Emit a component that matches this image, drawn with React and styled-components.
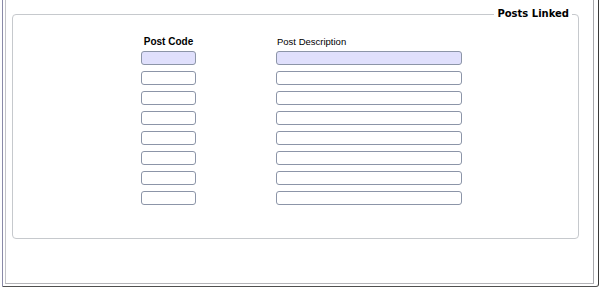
import { Fragment } from "react"
import styled, { createGlobalStyle } from "styled-components"

const GlobalStyle = createGlobalStyle`
    html, body {
        margin: 0;
        padding: 0;
        background: #ffffff;
        overflow: hidden;
    }
    body {
        font-family: "Liberation Sans", Arial, sans-serif;
        font-size: 11px;
        color: #000000;
    }
`
const Window = styled.div`
    width: 600px;
    height: 100vh;
    box-sizing: border-box;
    padding: 0 1px 1px 2px;
    background: #ffffff;
    display: flex;
`
const Frame = styled.div`
    flex: 1;
    display: flex;
    box-sizing: border-box;
    border-left: 1px solid #8a8aa8;
    border-right: 1px solid #3a3a3a;
    border-bottom: 1px solid #505050;
    border-bottom-right-radius: 3px;
    padding: 0 4px 2px 2px;
`
const Panel = styled.div`
    flex: 1;
    box-sizing: border-box;
    border-left: 1px solid #c4c4c8;
    border-right: 1px solid #a8a8ac;
    border-bottom: 1px solid #b4b4b8;
    padding: 0 14px 0 6px;
`
const GroupBox = styled.fieldset`
    margin: 7px 0 0 0;
    padding: 14px 0 33px 128px;
    border: 1px solid #c6c9cd;
    border-radius: 4px;
`
const Legend = styled.legend`
    margin-left: auto;
    margin-right: 6px;
    padding: 0 3px;
    font-family: "DejaVu Sans", Verdana, sans-serif;
    font-size: 10px;
    font-weight: 700;
    line-height: 14px;
`
const Grid = styled.div`
    display: grid;
    grid-template-columns: 55px 186px;
    column-gap: 80px;
    row-gap: 6px;
`
const Heading = styled.div`
    font-size: ${p => (p.$bold ? "10px" : "9.5px")};
    line-height: 14px;
    margin-bottom: -4px;
    font-weight: ${p => (p.$bold ? 700 : 400)};
    text-align: ${p => (p.$center ? "center" : "left")};
    padding-left: ${p => (p.$center ? "0" : "1px")};
`
const Field = styled.input`
    display: block;
    box-sizing: border-box;
    width: 100%;
    height: 14px;
    margin: 0;
    padding: 0 3px;
    border: 1px solid #8c95a8;
    border-radius: 3px;
    background: ${p => (p.$active ? "#e0e0fc" : "#ffffff")};
    font-family: "Liberation Sans", Arial, sans-serif;
    font-size: 10px;
    outline: none;
`

const rows = Array.from({ length: 8 }, (_, i) => i)

const App = () => {
    return (
        <>
            <GlobalStyle />
            <Window>
                <Frame>
                    <Panel>
                        <GroupBox>
                            <Legend>Posts Linked</Legend>
                            <Grid>
                                <Heading $bold $center>Post Code</Heading>
                                <Heading>Post Description</Heading>
                                {rows.map(i => (
                                    <Fragment key={i}>
                                        <Field $active={i === 0} />
                                        <Field $active={i === 0} />
                                    </Fragment>
                                ))}
                            </Grid>
                        </GroupBox>
                    </Panel>
                </Frame>
            </Window>
        </>
    )
}

export default App
